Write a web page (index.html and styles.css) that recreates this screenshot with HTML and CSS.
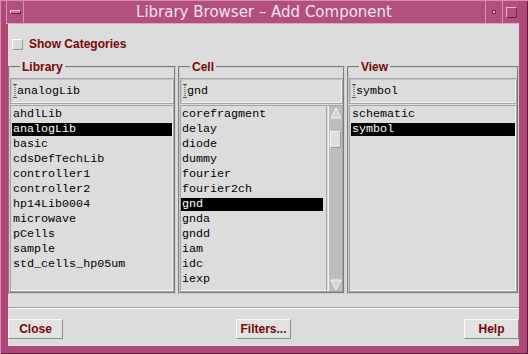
FILE: index.html
```html
<!DOCTYPE html>
<html>
<head>
<meta charset="utf-8">
<link rel="stylesheet" href="styles.css">
</head>
<body>
<div class="window">
  <div class="titlebar">
    <div class="tb-menu"><span class="menu-bar"></span></div>
    <div class="tb-title">Library Browser – Add Component</div>
    <div class="tb-btn"><span class="min-dot"></span></div>
    <div class="tb-btn"><span class="max-box"></span></div>
  </div>
  <div class="content">
    <div class="check-row"><span class="checkbox"></span><span class="check-label">Show Categories</span></div>
    <div class="panes">
      <fieldset class="pane pane-lib">
        <legend>Library</legend>
        <div class="field"><svg class="ibeam" width="4" height="14" viewBox="0 0 4 14"><path d="M0 0.5H4M0 13.5H4" stroke="#555" stroke-width="1"/><path d="M2 1V13" stroke="#333" stroke-width="1" stroke-dasharray="1 1"/></svg><span>analogLib</span></div>
        <div class="list">
          <ul class="items">
            <li>ahdlLib</li>
            <li class="sel">analogLib</li>
            <li>basic</li>
            <li>cdsDefTechLib</li>
            <li>controller1</li>
            <li>controller2</li>
            <li>hp14Lib0004</li>
            <li>microwave</li>
            <li>pCells</li>
            <li>sample</li>
            <li>std_cells_hp05um</li>
          </ul>
        </div>
      </fieldset>
      <fieldset class="pane pane-cell">
        <legend>Cell</legend>
        <div class="field"><svg class="ibeam" width="4" height="14" viewBox="0 0 4 14"><path d="M0 0.5H4M0 13.5H4" stroke="#555" stroke-width="1"/><path d="M2 1V13" stroke="#333" stroke-width="1" stroke-dasharray="1 1"/></svg><span>gnd</span></div>
        <div class="list list-scroll">
          <ul class="items items-cell">
            <li>corefragment</li>
            <li>delay</li>
            <li>diode</li>
            <li>dummy</li>
            <li>fourier</li>
            <li>fourier2ch</li>
            <li class="sel">gnd</li>
            <li>gnda</li>
            <li>gndd</li>
            <li>iam</li>
            <li>idc</li>
            <li>iexp</li>
          </ul>
          <div class="scrollbar">
            <div class="arrow"><svg width="12" height="12" viewBox="0 0 12 12"><polygon points="6,1 11,11 1,11" fill="#d6d6d6" stroke="#f2f2f2" stroke-width="1"/></svg></div>
            <div class="trough"><div class="thumb"></div></div>
            <div class="arrow"><svg width="12" height="12" viewBox="0 0 12 12"><polygon points="1,1 11,1 6,11" fill="#d6d6d6" stroke="#f2f2f2" stroke-width="1"/></svg></div>
          </div>
        </div>
      </fieldset>
      <fieldset class="pane pane-view">
        <legend>View</legend>
        <div class="field"><svg class="ibeam" width="4" height="14" viewBox="0 0 4 14"><path d="M0 0.5H4M0 13.5H4" stroke="#555" stroke-width="1"/><path d="M2 1V13" stroke="#333" stroke-width="1" stroke-dasharray="1 1"/></svg><span>symbol</span></div>
        <div class="list">
          <ul class="items">
            <li>schematic</li>
            <li class="sel">symbol</li>
          </ul>
        </div>
      </fieldset>
    </div>
    <div class="sep"></div>
    <div class="buttons">
      <button class="btn">Close</button>
      <button class="btn">Filters...</button>
      <button class="btn">Help</button>
    </div>
  </div>
</div>
</body>
</html>
```

FILE: styles.css
```css
* { box-sizing: border-box; }
html, body { margin: 0; padding: 0; width: 528px; height: 354px; overflow: hidden; }
body { font-family: "Liberation Sans", Arial, sans-serif; background: #ad4877; }

.window {
  width: 528px;
  height: 354px;
  background: #ad4877;
  padding: 1px 9px 8px 6px;
  display: flex;
  flex-direction: column;
  box-shadow: inset 1px 1px 0 #d88cae, inset -1px -1px 0 #5a1c38;
}

.titlebar {
  height: 23px;
  display: flex;
  background: #b24f7d;
  border-bottom: 1px solid #e2a4bf;
}
.tb-menu {
  width: 18px;
  border-left: 1px solid #d890b0;
  border-right: 1px solid #d890b0;
  display: flex;
  align-items: center;
  justify-content: center;
}
.menu-bar {
  width: 11px;
  height: 4px;
  background: #d07aa0;
  border: 1px solid;
  border-color: #eec0d4 #6e2448 #6e2448 #eec0d4;
}
.tb-title {
  flex: 1;
  text-align: center;
  padding-left: 19px;
  font-family: "DejaVu Sans", sans-serif;
  font-size: 15px;
  line-height: 22px;
  color: #f4e3eb;
  white-space: nowrap;
}
.tb-btn {
  width: 17px;
  border-left: 1px solid #d890b0;
  display: flex;
  align-items: center;
  justify-content: center;
}
.min-dot {
  width: 4px;
  height: 4px;
  background: #e8b6cb;
  border: 1px solid #6e2448;
}
.max-box {
  width: 11px;
  height: 11px;
  border: 1px solid;
  border-color: #eab4ca #6e2448 #6e2448 #eab4ca;
}

.content {
  margin-left: 2px;
  flex: 1;
  background: #dcdcdc;
  padding: 14px 0 7px;
  display: flex;
  flex-direction: column;
}

.check-row {
  display: flex;
  align-items: center;
  gap: 6px;
  padding-left: 4px;
  height: 12px;
}
.checkbox {
  width: 11px;
  height: 11px;
  border: 1px solid;
  border-color: #ffffff #9a9a9a #9a9a9a #ffffff;
  background: #dcdcdc;
}
.check-label {
  font-weight: bold;
  font-size: 12px;
  color: #7a0606;
}

.panes {
  margin-top: 10px;
  display: flex;
  gap: 2px;
  height: 234px;
}
.pane {
  margin: 0;
  padding: 0;
  border: 2px groove #cfcfcf;
  min-width: 0;
  display: flex;
  flex-direction: column;
}
.pane-lib { width: 168px; }
.pane-cell { width: 167px; }
.pane-view { flex: 1; }
.pane legend {
  margin-left: 10px;
  padding: 0 2px;
  font-weight: bold;
  font-size: 12px;
  line-height: 14px;
  color: #7a0606;
}

.field {
  margin-top: 4px;
  height: 26px;
  border: 1px solid #a4a4a4;
  box-shadow: inset -1px -1px 0 #f2f2f2, inset 1px 1px 0 #c4c4c4;
  display: flex;
  align-items: center;
  padding-left: 2px;
  font-family: "Liberation Mono", monospace;
  font-size: 11.7px;
  color: #000;
}
.ibeam { display: block; margin-right: 0; }

.list {
  margin-top: 1px;
  height: 187px;
  border: 1px solid #a4a4a4;
  box-shadow: inset -1px -1px 0 #f2f2f2;
  font-family: "Liberation Mono", monospace;
  font-size: 11.7px;
  color: #000;
}
.items {
  list-style: none;
  margin: 0;
  padding: 2px 1px 0;
}
.items li {
  height: 13px;
  line-height: 13px;
  margin-bottom: 2px;
  padding-left: 1px;
  white-space: nowrap;
}
.items li.sel {
  background: #000;
  color: #fff;
}

.list-scroll {
  display: flex;
}
.items-cell {
  flex: 1;
  padding: 2px 3px 0 0;
  border-right: 1px solid #a4a4a4;
}
.scrollbar {
  width: 14px;
  margin-left: 1px;
  border-left: 1px solid #f2f2f2;
  background: #bdbdbd;
  display: flex;
  flex-direction: column;
}
.arrow {
  height: 13px;
  display: flex;
  align-items: center;
  justify-content: center;
}
.trough {
  flex: 1;
  padding-top: 12px;
}
.thumb {
  height: 17px;
  margin: 0 1px;
  background: #dedede;
  border: 1px solid;
  border-color: #f6f6f6 #9a9a9a #9a9a9a #f6f6f6;
}

.sep {
  margin-top: 13px;
  height: 2px;
  border-top: 1px solid #a0a0a0;
  border-bottom: 1px solid #ffffff;
}

.buttons {
  margin-top: 10px;
  display: flex;
  justify-content: space-between;
}
.btn {
  width: 55px;
  height: 20px;
  padding: 0;
  background: #e2e2e2;
  border: 1px solid;
  border-color: #fafafa #8e8e8e #8e8e8e #fafafa;
  font-family: "Liberation Sans", Arial, sans-serif;
  font-weight: bold;
  font-size: 12px;
  color: #7a0606;
}
```
